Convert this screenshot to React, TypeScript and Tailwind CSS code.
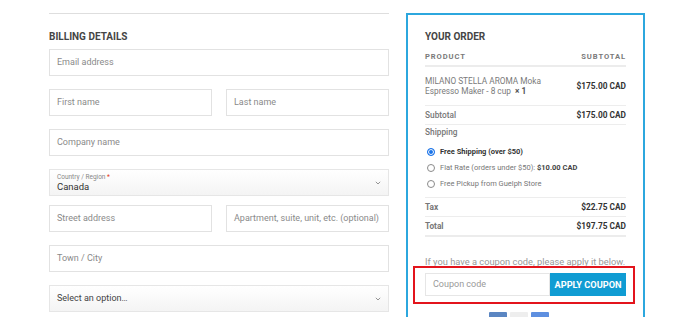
import React from "react";

const font = { fontFamily: "Roboto, 'Liberation Sans', sans-serif" };

const Field = ({ label, className = "" }: { label: string; className?: string }) => (
  <div className={`h-[27px] border border-[#e2e2e2] bg-white flex items-center pl-[7px] text-[9px] text-[#8a8a8a] ${className}`}>
    {label}
  </div>
);

const Chevron = () => (
  <svg width="6" height="4" viewBox="0 0 6 4" className="absolute right-[7px] top-1/2 -translate-y-1/2">
    <path d="M0.8 0.8l2.2 2.2 2.2-2.2" fill="none" stroke="#888" strokeWidth="0.9" />
  </svg>
);

const Radio = ({ checked }: { checked?: boolean }) =>
  checked ? (
    <span className="w-[8px] h-[8px] rounded-full bg-[#1a73e8] border-[1.5px] border-[#1a73e8] shadow-[inset_0_0_0_1px_white] shrink-0" />
  ) : (
    <span className="w-[8px] h-[8px] rounded-full border border-[#8a8a8a] bg-white shrink-0" />
  );

export default function App() {
  return (
    <div className="w-[700px] h-[317px] overflow-hidden bg-white flex pl-[49px] pt-[13px] gap-[17px]" style={font}>
      {/* Billing */}
      <div className="w-[340px] border-t border-[#dedede] flex flex-col">
        <h2 className="mt-[16px] h-[13px] leading-[13px] text-[10px] font-bold text-[#454545]">BILLING DETAILS</h2>
        <Field label="Email address" className="mt-[6px]" />
        <div className="mt-[13px] grid grid-cols-2 gap-[14px]">
          <Field label="First name" />
          <Field label="Last name" />
        </div>
        <Field label="Company name" className="mt-[13px]" />
        <div className="relative mt-[13px] h-[27px] border border-[#e6e6e6] bg-gradient-to-b from-white to-[#f4f4f4] pl-[7px] flex flex-col justify-center">
          <div className="text-[6.5px] leading-[8px] text-[#888]">
            Country / Region <span className="text-[#e2401c]">*</span>
          </div>
          <div className="text-[9.5px] leading-[11px] text-[#333]">Canada</div>
          <Chevron />
        </div>
        <div className="mt-[9px] grid grid-cols-2 gap-[14px]">
          <Field label="Street address" />
          <Field label="Apartment, suite, unit, etc. (optional)" />
        </div>
        <Field label="Town / City" className="mt-[13px]" />
        <div className="relative mt-[13px] h-[27px] border border-[#e6e6e6] bg-gradient-to-b from-white to-[#f4f4f4] pl-[7px] flex items-center text-[9px] text-[#444]">
          Select an option…
          <Chevron />
        </div>
      </div>

      {/* Order */}
      <div className="w-[239px] h-[320px] border-2 border-[#2ca7de] px-[17px] pt-[15px] text-[8.3px]">
        <h2 className="h-[13px] leading-[13px] text-[10px] font-bold text-[#454545]">YOUR ORDER</h2>
        <div className="h-[24px] pt-[6px] flex justify-between items-center border-b-2 border-[#ececec] text-[7.6px] font-bold tracking-[0.9px] text-[#7a7a7a]">
          <span>PRODUCT</span>
          <span>SUBTOTAL</span>
        </div>
        <div className="h-[39px] flex justify-between items-center border-b border-[#ededed]">
          <div className="leading-[10px] text-[#7a7a7a]">
            MILANO STELLA AROMA Moka
            <br />
            Espresso Maker - 8 cup <span className="font-bold text-[#555]">&nbsp;× 1</span>
          </div>
          <span className="font-bold text-[#333]">$175.00 CAD</span>
        </div>
        <div className="h-[19px] flex justify-between items-center border-b border-[#ededed]">
          <span className="text-[#777] font-medium">Subtotal</span>
          <span className="font-bold text-[#333]">$175.00 CAD</span>
        </div>
        <div className="h-[73px] pt-[2px] border-b border-[#ededed]">
          <div className="h-[11px] leading-[11px] text-[#777] font-medium">Shipping</div>
          <div className="mt-[6px] text-[7.5px]">
            <div className="h-[16px] flex items-center gap-[5px] pl-[2px]">
              <Radio checked />
              <span className="font-bold text-[#333]">Free Shipping (over $50)</span>
            </div>
            <div className="h-[16px] flex items-center gap-[5px] pl-[2px] text-[#777]">
              <Radio />
              <span>
                Flat Rate (orders under $50): <span className="font-bold text-[#444]">$10.00 CAD</span>
              </span>
            </div>
            <div className="h-[16px] flex items-center gap-[5px] pl-[2px] text-[#777]">
              <Radio />
              <span>Free Pickup from Guelph Store</span>
            </div>
          </div>
        </div>
        <div className="h-[19px] flex justify-between items-center border-b border-[#ededed]">
          <span className="text-[#777] font-bold">Tax</span>
          <span className="font-bold text-[#333]">$22.75 CAD</span>
        </div>
        <div className="h-[20px] flex justify-between items-center border-b-2 border-[#ececec]">
          <span className="text-[#777] font-bold">Total</span>
          <span className="font-bold text-[#333]">$197.75 CAD</span>
        </div>
        <p className="mt-[18px] h-[13px] leading-[13px] text-[9.3px] text-[#999] whitespace-nowrap">
          If you have a coupon code, please apply it below.
        </p>
        <div className="relative mt-[5px] h-[23px] flex">
          <div className="w-[125px] border border-[#e6e6e6] bg-white flex items-center pl-[7px] text-[9px] text-[#999]">
            Coupon code
          </div>
          <div className="flex-1 bg-[#109cd3] flex items-center justify-center text-[9.2px] font-bold text-white">
            APPLY COUPON
          </div>
          <div className="absolute -top-[7px] -bottom-[8px] -left-[12px] -right-[9px] border-2 border-[#e3141c]" />
        </div>
        <div className="mt-[16px] flex gap-[3px] pl-[64px]">
          <div className="w-[18px] h-[10px] rounded-[1px] bg-[#5b86c2]" />
          <div className="w-[18px] h-[10px] rounded-[1px] bg-[#eeeeee]" />
          <div className="w-[18px] h-[10px] rounded-[1px] bg-[#5e8fe0]" />
        </div>
      </div>
    </div>
  );
}
